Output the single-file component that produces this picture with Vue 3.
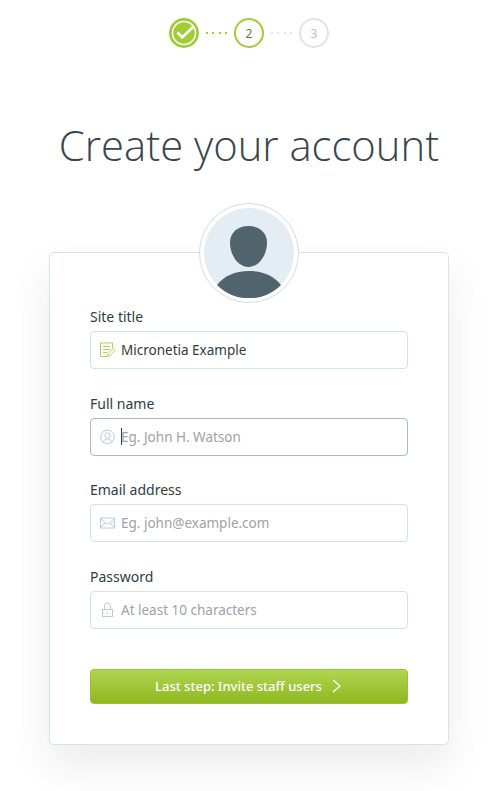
<template>
  <div class="page">
    <div class="steps">
      <div class="step done">
        <svg width="30" height="30" viewBox="0 0 30 30">
          <circle cx="15" cy="15" r="14" fill="#a0cd36" stroke="#a0cd36" stroke-width="2" />
          <circle cx="15" cy="15" r="11.5" fill="none" stroke="#fff" stroke-width="1.5" />
          <path d="M8.5 14.5l4.8 5L25 8" fill="none" stroke="#fff" stroke-width="2.6" />
        </svg>
      </div>
      <div class="dots on"><i v-for="n in 4" :key="n"></i></div>
      <div class="step current">2</div>
      <div class="dots"><i v-for="n in 4" :key="n"></i></div>
      <div class="step">3</div>
    </div>

    <h1>Create your account</h1>

    <div class="avatar">
      <svg width="90" height="90" viewBox="0 0 90 90">
        <circle cx="45" cy="45" r="45" fill="#e4ecf4" />
        <path d="M44.500 18c10 0 18.500 6 18.500 16.500C63 47 55 59 44.500 59S26 47 26 34.500C26 24 34.500 18 44.500 18z" fill="#51646c" />
        <path d="M13 77c7-9 18-14 32-14s25 5 32 14a45 45 0 0 1-64 0z" fill="#51646c" />
      </svg>
    </div>

    <form class="card" @submit.prevent>
      <div v-for="f in fields" :key="f.label" class="field">
        <label :for="f.id">{{ f.label }}</label>
        <div class="control" :class="{ focused: f.id === 'name' }">
          <svg v-if="f.id === 'site'" class="icon" width="16" height="16" viewBox="0 0 16 16" fill="none" stroke="#a9d55a" stroke-width="1">
            <path d="M7.500 14.500H.5V1h12v5" />
            <path d="M3 4.500h7M3 7.500h7M3 10.500h4" />
            <path d="M7.500 14.500l.5-3 5-5 2 2-5 5z" />
          </svg>
          <svg v-else-if="f.id === 'name'" class="icon" width="16" height="16" viewBox="0 0 16 16" fill="none" stroke="#b4cde0" stroke-width="1">
            <circle cx="7.500" cy="8" r="6.800" />
            <circle cx="7.500" cy="6.500" r="2.800" />
            <path d="M3 13c1-2.200 2.600-3 4.500-3s3.500.8 4.500 3" />
          </svg>
          <svg v-else-if="f.id === 'email'" class="icon" width="16" height="16" viewBox="0 0 16 16" fill="none" stroke="#b4cde0" stroke-width="1">
            <rect x=".5" y="3" width="14" height="10" />
            <path d="M.5 3.500l5 4.500 2 1 2-1 5-4.500M.5 12.500l4.500-4.500M14.500 12.500L10 8" />
          </svg>
          <svg v-else class="icon" width="16" height="16" viewBox="0 0 16 16" fill="none" stroke="#b4cde0" stroke-width="1">
            <rect x="2.500" y="7.500" width="10" height="7" />
            <path d="M4.500 7.500V4a3 3 0 0 1 6 0v3.500M7.500 10.500v1.500" />
          </svg>
          <span v-if="f.id === 'name'" class="caret"></span>
          <input :id="f.id" type="text" :value="f.value" :placeholder="f.hint" />
        </div>
      </div>

      <button type="submit" class="next">
        <span>Last step: Invite staff users</span>
        <svg width="12" height="16" viewBox="0 0 12 16" fill="none" stroke="#fff" stroke-width="1.300"><path d="M2 2l7 6-7 6" /></svg>
      </button>
    </form>
  </div>
</template>

<script setup>
const fields = [
  { id: 'site', label: 'Site title', value: 'Micronetia Example', hint: '' },
  { id: 'name', label: 'Full name', value: '', hint: 'Eg. John H. Watson' },
  { id: 'email', label: 'Email address', value: '', hint: 'Eg. john@example.com' },
  { id: 'password', label: 'Password', value: '', hint: 'At least 10 characters' },
];
</script>

<style>
html, body { background: #fff; }
</style>

<style scoped>
.page {
  width: 494px;
  height: 791px;
  overflow: hidden;
  box-sizing: border-box;
  padding: 18px 0 0 4px;
  display: flex;
  flex-direction: column;
  align-items: center;
  font-family: "Noto Sans", sans-serif;
  color: #2f3d44;
}
.steps {
  display: flex;
  align-items: center;
  height: 30px;
}
.step {
  width: 30px;
  height: 30px;
  box-sizing: border-box;
  border: 2px solid #e3e3e3;
  border-radius: 50%;
  display: flex;
  align-items: center;
  justify-content: center;
  font-size: 12px;
  color: #b9bec2;
}
.step.current {
  border-color: #a0cd36;
  color: #5f7a3a;
}
.step.done {
  border: 0;
}
.dots {
  width: 35px;
  display: flex;
  justify-content: center;
  gap: 4.500px;
}
.dots i {
  width: 2px;
  height: 2px;
  background: #e3e3e3;
}
.dots.on i {
  background: #a0cd36;
}
h1 {
  margin: 70px 0 0;
  font-family: "Open Sans", sans-serif;
  font-weight: 300;
  font-size: 41.800px;
  line-height: 54px;
  color: #38464d;
  white-space: nowrap;
}
.avatar {
  position: relative;
  z-index: 1;
  margin-top: 31px;
  margin-bottom: -51px;
  width: 100px;
  height: 100px;
  box-sizing: border-box;
  border: 1px solid #d3dcdd;
  border-radius: 50%;
  background: #fff;
  display: flex;
  align-items: center;
  justify-content: center;
}
.avatar svg {
  display: block;
}
.card {
  width: 400px;
  height: 493px;
  box-sizing: border-box;
  padding: 54px 40px 0;
  background: #fff;
  border: 1px solid #d9e2e8;
  border-radius: 5px;
  box-shadow: 0 20px 40px rgba(30, 35, 40, 0.09);
}
.field {
  margin-bottom: 24.500px;
}
label {
  display: block;
  font-size: 14px;
  line-height: 20px;
  margin-bottom: 4px;
  color: #2f3d44;
}
.control {
  height: 38px;
  box-sizing: border-box;
  border: 1px solid #d5e1ea;
  border-radius: 4px;
  display: flex;
  align-items: center;
  padding-left: 9px;
  gap: 5px;
}
.control.focused {
  border-color: #aab8c2;
}
.icon {
  flex: none;
}
.caret {
  flex: none;
  width: 1px;
  height: 17px;
  margin-right: -6px;
  background: #2f3d44;
}
input {
  flex: 1;
  min-width: 0;
  border: 0;
  outline: 0;
  padding: 0;
  background: transparent;
  font-family: inherit;
  font-size: 13.500px;
  color: #2f3d44;
}
input::placeholder {
  color: #9da3a8;
  opacity: 1;
}
.next {
  width: 100%;
  height: 35px;
  margin-top: 40px;
  border: 1px solid #9cc22f;
  border-radius: 4px;
  background: linear-gradient(#afd651, #8fb71f);
  color: #fff;
  font-family: inherit;
  font-size: 13px;
  font-weight: 500;
  display: flex;
  align-items: center;
  justify-content: center;
  gap: 9px;
  padding: 0;
}
</style>
